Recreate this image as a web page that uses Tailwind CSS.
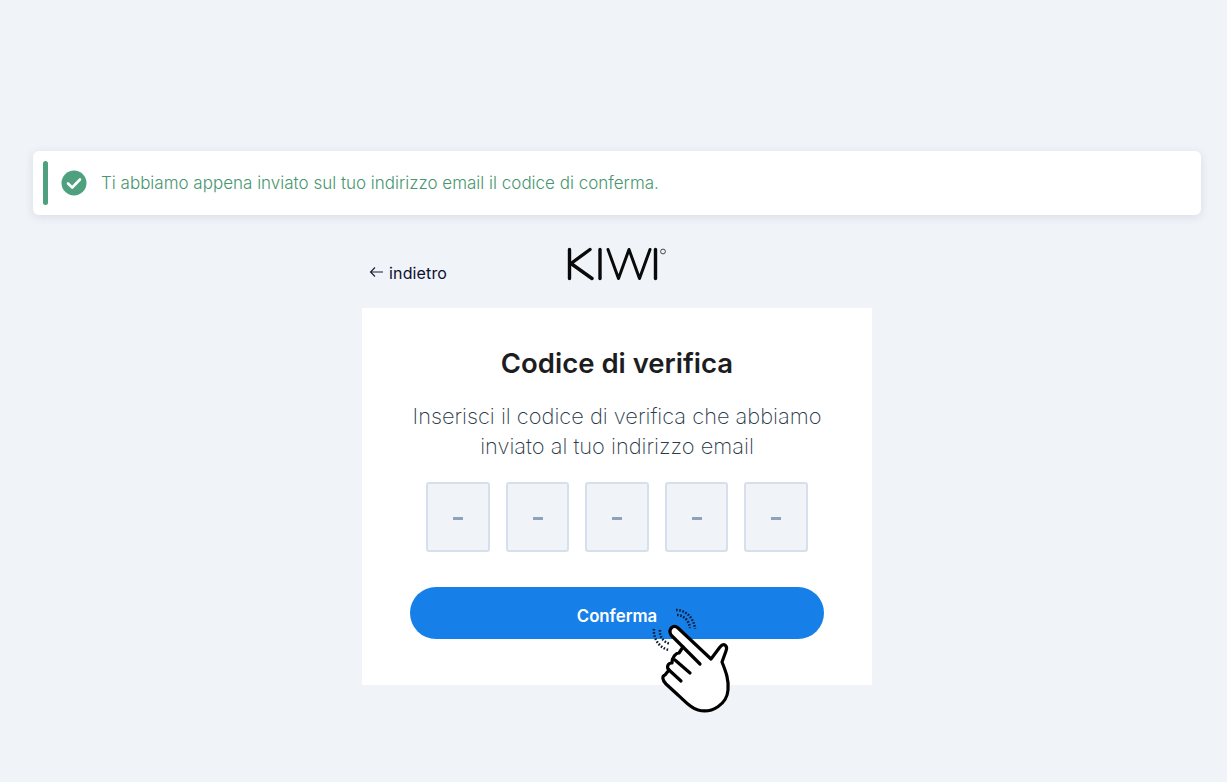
<!DOCTYPE html>
<html lang="it">
<head>
<meta charset="utf-8">
<title>Codice di verifica</title>
<script src="https://cdn.jsdelivr.net/npm/@tailwindcss/browser@4"></script>
</head>
<body class="bg-[#f0f3f8] font-['Inter','Liberation_Sans',sans-serif] h-[782px] overflow-hidden">
<div class="pt-[151px] pl-[33px] w-[1201px] flex flex-col items-center">
  <div class="w-[1168px] h-[64px] bg-white rounded-md shadow-[0_2px_8px_rgba(120,135,160,0.2)] flex items-center pl-[10px] gap-[13px]">
    <div class="w-[5px] h-[44px] rounded-full bg-[#4fa07f]"></div>
    <svg class="w-[26px] h-[26px]" viewBox="0 0 26 26"><circle cx="13" cy="13" r="12.5" fill="#4fa07f"/><path d="M7 13.5l4.200 4L19 9.500" fill="none" stroke="#fff" stroke-width="2.600" stroke-linecap="round" stroke-linejoin="round"/></svg>
    <span class="text-[17px] font-light text-[#47966f] ml-px pt-px">Ti abbiamo appena inviato sul tuo indirizzo email il codice di conferma.</span>
  </div>
  <div class="w-[510px] h-[93px] flex relative">
    <div class="absolute left-[7px] top-[48px] flex items-center gap-[5px] text-[16px] text-[#0b1030] leading-5">
      <svg class="w-[15px] h-[12px] -mt-[2px]" viewBox="0 0 15 12"><path d="M14 6H1.500M6 1.500L1.500 6 6 10.500" fill="none" stroke="#1a1d33" stroke-width="1.100"/></svg>
      <span class="tracking-[0.15px]">indietro</span>
    </div>
    <svg class="absolute left-[205px] top-[32px]" width="100" height="34" viewBox="0 0 100 34" aria-label="KIWI logo">
      <g fill="none" stroke="#0a0a0a" stroke-width="3.400" stroke-linecap="round" stroke-linejoin="round">
        <path d="M2.500 2.500v29M23 2.500L4 16.500 25 31.500"/>
        <path d="M33 2.500v29"/>
        <path d="M41 2.500l10.500 29 10.500-29 10.500 29 10.500-29" stroke-width="3"/>
        <path d="M88.500 2.500v29"/>
      </g>
      <circle cx="96" cy="4.500" r="2.400" fill="none" stroke="#333" stroke-width="0.900"/>
    </svg>
  </div>
  <div class="w-[510px] h-[377px] bg-white flex flex-col items-center">
    <h1 class="mt-[38px] text-[27.500px] leading-[34px] font-semibold text-[#1d1d1f]">Codice di verifica</h1>
    <p class="mt-[21px] w-[430px] text-center text-[21.800px] leading-[30px] font-extralight text-[#2b3a4a]">Inserisci il codice di verifica che abbiamo<br>inviato al tuo indirizzo email</p>
    <div class="mt-[21px] flex gap-[16px]">
      <div class="w-[64px] h-[70px] bg-[#f0f3f8] border-2 border-[#d6e0ec] rounded-[3px] flex items-center justify-center pt-[3px]"><span class="block w-[10px] h-[3px] bg-[#8ba3bc]"></span></div>
      <div class="w-[63px] h-[70px] bg-[#f0f3f8] border-2 border-[#d6e0ec] rounded-[3px] flex items-center justify-center pt-[3px]"><span class="block w-[10px] h-[3px] bg-[#8ba3bc]"></span></div>
      <div class="w-[64px] h-[70px] bg-[#f0f3f8] border-2 border-[#d6e0ec] rounded-[3px] flex items-center justify-center pt-[3px]"><span class="block w-[10px] h-[3px] bg-[#8ba3bc]"></span></div>
      <div class="w-[63px] h-[70px] bg-[#f0f3f8] border-2 border-[#d6e0ec] rounded-[3px] flex items-center justify-center pt-[3px]"><span class="block w-[10px] h-[3px] bg-[#8ba3bc]"></span></div>
      <div class="w-[64px] h-[70px] bg-[#f0f3f8] border-2 border-[#d6e0ec] rounded-[3px] flex items-center justify-center pt-[3px]"><span class="block w-[10px] h-[3px] bg-[#8ba3bc]"></span></div>
    </div>
    <button class="mt-[35px] w-[414px] h-[52px] rounded-full bg-[#177fe8] text-white text-[16.800px] font-semibold pt-[7px]">Conferma</button>
  </div>
</div>
<svg class="absolute left-[640px] top-[600px]" width="100" height="120" viewBox="0 0 100 120">
  <path d="M31 35C28 29 33 24 38 28L71 59L80 47C84 42 88 46 86 51L82 62C86 72 89 80 88 90C87 104 72 114 58 110C50 108 44 100 38 95L26 84C22 80 22 76 25 75L29 70C26 67 28 63 32 63C32 57 36 53 39 53L43 47Z" fill="#fff" stroke="#000" stroke-width="3.200" stroke-linejoin="round"/>
  <path d="M43 47L60 64M35 60L50 73M29 70L41 81" fill="none" stroke="#000" stroke-width="3.200" stroke-linecap="round"/>
  <g fill="none" stroke="#0d1a33" stroke-width="2.500" stroke-dasharray="1.600 1.600">
    <path d="M36 10C46 10 54 18 55 29"/>
    <path d="M37 15C44 15 49 21 50 28"/>
    <path d="M14 29C13 38 19 48 29 50"/>
    <path d="M20 30C19 36 23 42 30 44"/>
  </g>
</svg>
</body>
</html>
